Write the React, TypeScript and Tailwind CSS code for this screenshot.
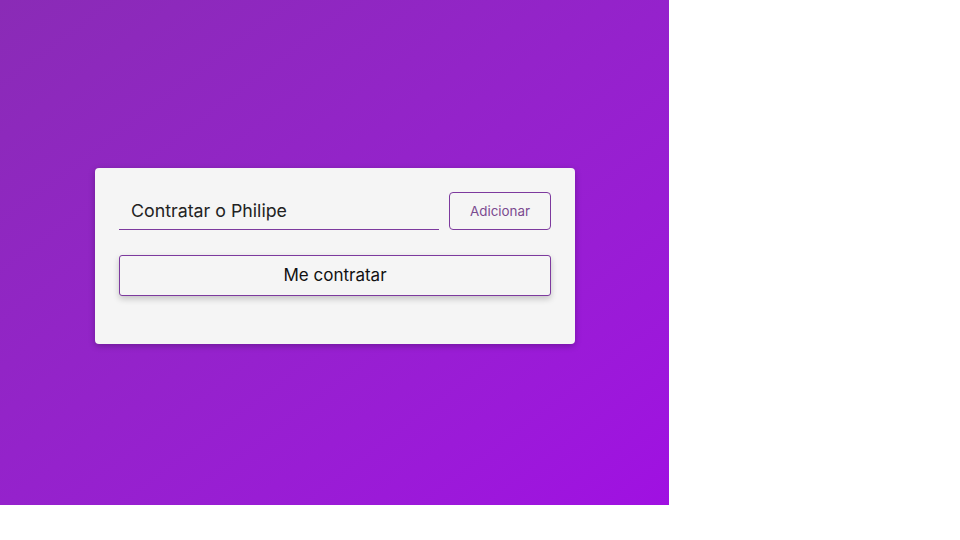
export default function App() {
  return (
    <div className="w-[960px] h-[540px] bg-white" style={{ fontFamily: "Inter, 'Open Sans', sans-serif" }}>
      <div className="w-[669px] h-[505px] bg-gradient-to-br from-[#8a2bb6] to-[#a010e2] pt-[168px] pl-[95px]">
        <div className="w-[480px] h-[176px] bg-[#f5f5f5] rounded-[4px] shadow-[0_2px_6px_rgba(0,0,0,0.25)] px-[24px] pt-[24px]">
          <div className="flex items-start gap-[10px]">
            <div className="w-[320px] h-[38px] border-b border-[#7d3a9e] flex items-center pl-[12px] pt-[1px] text-[17.8px] text-[#222]">
              Contratar o Philipe
            </div>
            <button className="w-[102px] h-[38px] border border-[#7d3a9e] rounded-[4px] text-[13.4px] text-[#7b4a90] bg-transparent">
              Adicionar
            </button>
          </div>
          <button className="mt-[25px] w-[432px] h-[41px] border border-[#7d3a9e] rounded-[3px] bg-[#f5f5f5] shadow-[0_3px_6px_rgba(0,0,0,0.2)] text-[17px] text-[#111]">
            Me contratar
          </button>
        </div>
      </div>
    </div>
  );
}
